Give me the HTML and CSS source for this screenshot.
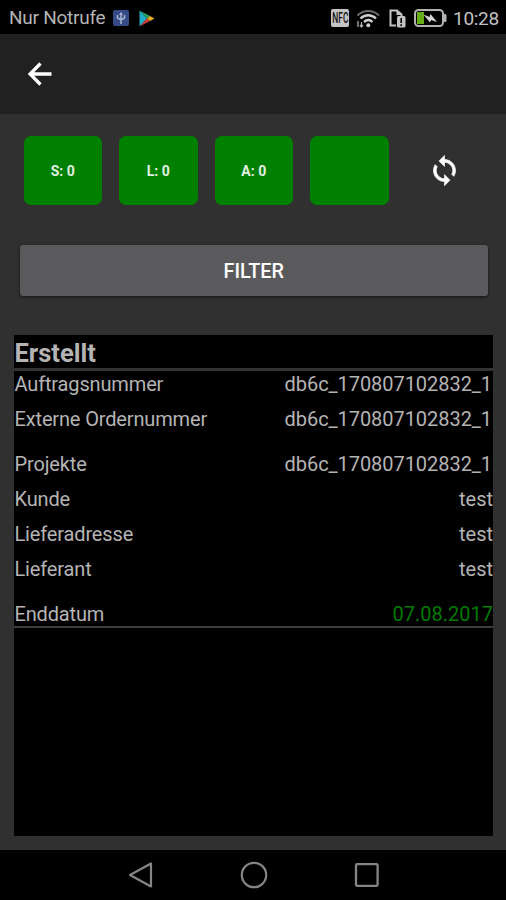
FILE: index.html
```html
<!DOCTYPE html>
<html lang="de">
<head>
    <meta charset="UTF-8">
    <title>Aufträge</title>
    <link rel="stylesheet" href="styles.css">
</head>
<body>
    <div class="statusbar">
        <span class="carrier">Nur Notrufe</span>
        <svg class="ic-usb" width="16" height="16" viewBox="0 0 16 16">
            <rect width="16" height="16" rx="2" fill="#354b87"/>
            <path d="M8 14V3M4.500 5v3L8 10l3.500-2V5" fill="none" stroke="#a9b4d0" stroke-width="1.500"/>
            <path d="M6 5l2-3 2 3z" fill="#a9b4d0"/>
        </svg>
        <svg class="ic-play" width="16" height="17" viewBox="0 0 16 17">
            <path d="M0.500 0.500L8 8.500 0.500 16.500z" fill="#24a9c4"/>
            <path d="M0.500 0.500L11 6 8 8.500z" fill="#27a567"/>
            <path d="M0.500 16.500L11 11 8 8.500z" fill="#d23c3c"/>
            <path d="M11 6l4.500 2.500L11 11 8 8.500z" fill="#e3ac26"/>
        </svg>
        <div class="status-right">
            <div class="nfc"><span>NFC</span></div>
            <svg class="ic-wifi" width="24" height="19" viewBox="0 0 24 19">
                <path d="M1.500 6.500C7.500.5 17 .5 23 6.500" fill="none" stroke="#6d6d6d" stroke-width="2"/>
                <path d="M4.500 9.500c4.500-4.300 11-4.300 15.500 0M8 13c2.700-2.500 6-2.500 8.500 0" fill="none" stroke="#d0d0d0" stroke-width="2.400"/>
                <circle cx="12.300" cy="16.200" r="2" fill="#d0d0d0"/>
                <path d="M2 12v6M5.500 13v5M4 16l1.500 2 1.500-2" fill="none" stroke="#b0b0b0" stroke-width="1.300"/>
            </svg>
            <svg class="ic-sim" width="17" height="19" viewBox="0 0 17 19">
                <path d="M7 16.500H1.500V1.500H8L12.500 5.500V7" fill="none" stroke="#c4c4c4" stroke-width="2"/>
                <path d="M7.500 1v5h5" fill="#c4c4c4"/>
                <rect x="8" y="7" width="8.500" height="11.500" rx="1.500" fill="#c4c4c4"/>
                <path d="M12.200 9v5M12.200 15.300v1.700" stroke="#000" stroke-width="1.600"/>
            </svg>
            <svg class="ic-battery" width="33" height="18" viewBox="0 0 33 18">
                <rect x="1" y="1" width="28" height="16" rx="3.500" fill="#000" stroke="#b2b2b2" stroke-width="2"/>
                <path d="M30 5h1q1.500 0 1.500 1.500v5q0 1.500-1.500 1.500h-1z" fill="#b2b2b2"/>
                <rect x="3" y="3" width="7" height="12" fill="#65ad16"/>
                <path d="M9.500 5.500l6 2.500 1-3 6.500 8-6-2-1 2.500z" fill="#d5d5d5"/>
            </svg>
            <span class="clock">10:28</span>
        </div>
    </div>

    <div class="toolbar">
        <svg width="24" height="24" viewBox="0 0 24 24">
            <path d="M23.500 12H2M12.500 1.500L2 12l10.500 10.500" fill="none" stroke="#fff" stroke-width="3.300"/>
        </svg>
    </div>

    <div class="content">
        <div class="counters">
            <div class="counter">S: 0</div>
            <div class="counter">L: 0</div>
            <div class="counter">A: 0</div>
            <div class="counter"></div>
            <svg class="sync" width="33" height="33" viewBox="0 0 24 24">
                <path fill="#fff" stroke="#fff" stroke-width=".5" d="M12 4V1L8 5l4 4V6c3.310 0 6 2.690 6 6 0 1.010-.25 1.970-.7 2.800l1.460 1.460C19.540 15.030 20 13.570 20 12c0-4.420-3.580-8-8-8zm0 14c-3.310 0-6-2.690-6-6 0-1.010.25-1.970.7-2.800L5.240 7.740C4.460 8.970 4 10.430 4 12c0 4.420 3.580 8 8 8v3l4-4-4-4v3z"/>
            </svg>
        </div>

        <button class="filter">FILTER</button>

        <div class="orders">
            <h2>Erstellt</h2>
            <div class="order">
                <div class="row"><span class="label">Auftragsnummer</span><span class="number">db6c_170807102832_1</span></div>
                <div class="row"><span class="label">Externe Ordernummer</span><span class="number">db6c_170807102832_1</span></div>
                <div class="row group"><span class="label">Projekte</span><span class="number">db6c_170807102832_1</span></div>
                <div class="row"><span class="label">Kunde</span><span>test</span></div>
                <div class="row"><span class="label">Lieferadresse</span><span>test</span></div>
                <div class="row"><span class="label">Lieferant</span><span>test</span></div>
                <div class="row group"><span class="label">Enddatum</span><span class="date">07.08.2017</span></div>
            </div>
        </div>
    </div>

    <div class="navbar">
        <svg width="26" height="28" viewBox="0 0 26 28">
            <path d="M2 14L23 2.500v23z" fill="none" stroke="#858585" stroke-width="2.200" stroke-linejoin="round"/>
        </svg>
        <svg width="28" height="28" viewBox="0 0 28 28">
            <circle cx="14" cy="14" r="12.200" fill="none" stroke="#858585" stroke-width="2.200"/>
        </svg>
        <svg width="26" height="28" viewBox="0 0 26 28">
            <rect x="2" y="3.200" width="21.600" height="21.600" rx="1" fill="none" stroke="#858585" stroke-width="2.300"/>
        </svg>
    </div>
</body>
</html>
```
FILE: styles.css
```css
* {
    box-sizing: border-box;
}

body {
    margin: 0;
    height: 900px;
    display: flex;
    flex-direction: column;
    background: #303030;
    color: #b4b4b4;
    font-family: Roboto, "Liberation Sans", sans-serif;
    overflow: hidden;
}

svg {
    display: block;
    flex: none;
}

/* status bar */
.statusbar {
    height: 34px;
    display: flex;
    align-items: center;
    padding: 2px 8px 0 9px;
    background: #000;
}

.carrier {
    font-size: 19px;
    letter-spacing: -0.25px;
    line-height: 20px;
    padding-bottom: 1px;
    width: 104px;
    white-space: nowrap;
}

.ic-play {
    margin-left: 10px;
}

.status-right {
    margin-left: auto;
    display: flex;
    align-items: center;
}

.nfc {
    width: 18px;
    height: 18px;
    display: flex;
    align-items: center;
    justify-content: center;
    border-radius: 2px;
    background: #c4c4c4;
    color: #111;
    font-size: 14px;
    font-weight: 500;
}

.nfc span {
    transform: scaleX(0.6);
}

.ic-wifi {
    margin-left: 7px;
}

.ic-sim {
    margin-left: 9px;
}

.ic-battery {
    margin-left: 8px;
}

.clock {
    margin-left: 6px;
    width: 45px;
    font-size: 19px;
    letter-spacing: -0.3px;
    color: #c0c0c0;
}

/* toolbar */
.toolbar {
    height: 80px;
    display: flex;
    align-items: center;
    padding-left: 28px;
    padding-bottom: 1px;
    background: #212121;
}

.content {
    flex: 1;
    display: flex;
    flex-direction: column;
    padding: 22px 13px 14px 14px;
}

.counters {
    display: flex;
    align-items: center;
    gap: 17px;
    padding-left: 9.500px;
}

.counter {
    width: 78.500px;
    height: 68.500px;
    display: flex;
    align-items: center;
    justify-content: center;
    padding-top: 2px;
    border-radius: 7px;
    background: #008000;
    color: #e2f0e2;
    font-size: 14px;
    font-weight: 700;
}

.sync {
    margin-left: 22px;
}

.filter {
    height: 51px;
    margin: 40.500px 5.500px 0 6px;
    padding: 2px 0 0;
    border: 0;
    border-radius: 3px;
    background: #5a595b;
    box-shadow: 0 1px 3px rgba(0, 0, 0, 0.6);
    color: #fff;
    font-family: inherit;
    font-size: 19.800px;
    font-weight: 500;
}

/* order list */
.orders {
    flex: 1;
    margin-top: 39px;
    background: #000;
}

.orders h2 {
    height: 36px;
    margin: 0;
    padding-left: 0.500px;
    border-bottom: 3px solid #333;
    font-size: 25.500px;
    font-weight: 700;
    line-height: 37px;
}

.order {
    border-bottom: 2px solid #3d3d3d;
}

.row {
    display: flex;
    justify-content: space-between;
    font-size: 20px;
    line-height: 26px;
}

.row + .row {
    margin-top: 9px;
}

.row + .group {
    margin-top: 19px;
}

.row:last-child {
    height: 25px;
}

.label {
    padding-left: 0.500px;
    letter-spacing: -0.150px;
}

.number {
    padding-right: 1px;
    letter-spacing: -0.050px;
}

.date {
    color: #007a00;
}

/* navigation keys */
.navbar {
    height: 50px;
    display: flex;
    align-items: center;
    justify-content: center;
    gap: 86px;
    padding-left: 1px;
    background: #000;
}
```
